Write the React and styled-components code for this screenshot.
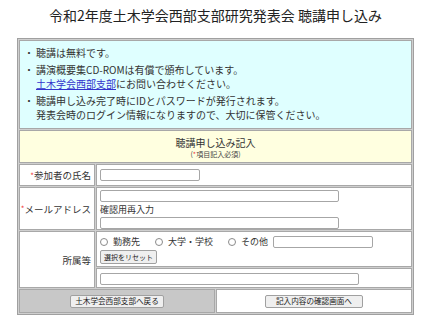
import React from "react";
import styled, { createGlobalStyle } from "styled-components";

const Global = createGlobalStyle`
  *, *::before, *::after { box-sizing: border-box; }
  html, body { margin: 0; padding: 0; background: #fff; }
  body {
    font-family: "Noto Sans CJK JP", "Noto Sans", sans-serif;
    color: #333;
  }
`;

const Page = styled.div`
  width: 425px;
  padding: 5px 0 0 17px;
`;

const Title = styled.h1`
  width: 397px;
  margin: 0 0 13px;
  font-size: 14px;
  font-weight: normal;
  line-height: 20px;
  text-align: center;
  color: #222;
`;

const Frame = styled.div`
  width: 397px;
  border: 1px solid #a0a0a0;
  padding: 1px;
  background: #cfcfcf;
  display: grid;
  grid-template-columns: 76px 1fr;
  gap: 1px;
`;

const Cell = styled.div`
  border: 1px solid #a8a8a8;
  background: ${(p) => p.$bg || "#fff"};
`;

const InfoCell = styled(Cell)`
  grid-column: 1 / -1;
  height: 89px;
  padding: 5px 10px 0 4px;
  font-size: 10px;
  line-height: 14px;
`;

const List = styled.ul`
  margin: 0;
  padding: 0;
  list-style: none;
`;

const Item = styled.li`
  display: flex;
  margin-bottom: 3px;
  &::before {
    content: "・";
    width: 12px;
    flex: none;
  }
`;

const Link = styled.a`
  color: #3333cc;
  text-decoration: underline;
`;

const HeaderCell = styled(Cell)`
  grid-column: 1 / -1;
  height: 33px;
  display: flex;
  flex-direction: column;
  align-items: center;
  justify-content: center;
  padding-top: 1px;
`;

const HeaderTitle = styled.div`
  font-size: 10px;
  line-height: 13px;
  color: #333;
`;

const HeaderNote = styled.div`
  font-size: 7px;
  line-height: 10px;
  color: #444;
`;

const Req = styled.span`
  color: #f03c3c;
  font-size: ${(p) => p.$size || "7px"};
  vertical-align: ${(p) => p.$up || "0"};
`;

const LabelCell = styled(Cell)`
  grid-row: ${(p) => p.$rows || "auto"};
  display: flex;
  align-items: center;
  justify-content: flex-end;
  padding-right: 3px;
  font-size: 9.5px;
  height: ${(p) => p.$h || "auto"};
`;

const FieldCell = styled(Cell)`
  height: ${(p) => p.$h};
  padding: ${(p) => p.$pad || "2px 2px"};
  display: flex;
  flex-direction: column;
  justify-content: ${(p) => p.$justify || "flex-start"};
  align-items: flex-start;
  font-size: 9px;
`;

const TextInput = styled.input`
  display: block;
  width: ${(p) => p.$w}px;
  height: ${(p) => p.$ht || 12}px;
  margin: 0 0 0 ${(p) => p.$ml || 1}px;
  padding: 0 2px;
  border: 1px solid #a6a6a6;
  border-radius: 2px;
  background: #fff;
  font-size: 9px;
  outline: none;
`;

const SubLabel = styled.div`
  line-height: 15px;
  margin-left: 1px;
  font-size: 9px;
  color: #333;
`;

const RadioRow = styled.div`
  display: flex;
  align-items: center;
  height: 14px;
  line-height: 14px;
`;

const RadioLabel = styled.label`
  display: flex;
  align-items: center;
  gap: 5px;
  margin-right: 14px;
  &:last-of-type { margin-right: 4px; }
`;

const Radio = styled.input.attrs({ type: "radio" })`
  appearance: none;
  width: 8px;
  height: 8px;
  margin: 0 0 0 1px;
  border: 1px solid #8a8a8a;
  border-radius: 50%;
  background: #fff;
`;

const SmallButton = styled.button`
  height: ${(p) => p.$h || 14}px;
  padding: 0 ${(p) => p.$px || 3}px;
  margin: ${(p) => p.$m || "0"};
  border: 1px solid #a0a0a0;
  border-radius: 2px;
  background: #efefef;
  color: #222;
  font-family: inherit;
  font-size: ${(p) => p.$fs || "7px"};
  line-height: 1;
  cursor: pointer;
`;

const ButtonRow = styled.div`
  grid-column: 1 / -1;
  display: grid;
  grid-template-columns: 1fr 1fr;
  gap: 1px;
`;

const ButtonCell = styled(Cell)`
  height: 24px;
  display: flex;
  align-items: center;
  justify-content: center;
`;

export default function App() {
  return (
    <>
      <Global />
      <Page>
        <Title>令和2年度土木学会西部支部研究発表会 聴講申し込み</Title>
        <Frame>
          <InfoCell $bg="#dfffff">
            <List>
              <Item>聴講は無料です。</Item>
              <Item>
                <span>
                  講演概要集CD-ROMは有償で頒布しています。
                  <br />
                  <Link href="#">土木学会西部支部</Link>にお問い合わせください。
                </span>
              </Item>
              <Item>
                <span>
                  聴講申し込み完了時にIDとパスワードが発行されます。
                  <br />
                  発表会時のログイン情報になりますので、大切に保管ください。
                </span>
              </Item>
            </List>
          </InfoCell>

          <HeaderCell $bg="#ffffe0">
            <HeaderTitle>聴講申し込み記入</HeaderTitle>
            <HeaderNote>
              (<Req $size="7px">*</Req>項目記入必須)
            </HeaderNote>
          </HeaderCell>

          <LabelCell $h="22px">
            <Req $size="8px" $up="2px">*</Req>参加者の氏名
          </LabelCell>
          <FieldCell $h="22px" $justify="center" $pad="0 2px">
            <TextInput $w={100} />
          </FieldCell>

          <LabelCell $h="43px">
            <Req $size="8px" $up="2px">*</Req>メールアドレス
          </LabelCell>
          <FieldCell $h="43px">
            <TextInput $w={239} />
            <SubLabel>確認用再入力</SubLabel>
            <TextInput $w={239} />
          </FieldCell>

          <LabelCell $rows="span 2">所属等</LabelCell>
          <FieldCell $h="36px" $pad="3px 2px 2px">
            <RadioRow>
              <RadioLabel>
                <Radio name="aff" />
                勤務先
              </RadioLabel>
              <RadioLabel>
                <Radio name="aff" />
                大学・学校
              </RadioLabel>
              <RadioLabel>
                <Radio name="aff" />
                その他
              </RadioLabel>
              <TextInput $w={100} $ht={12} $ml={0} />
            </RadioRow>
            <SmallButton $m="1px 0 0 1px" $h={14} $fs="7px">
              選択をリセット
            </SmallButton>
          </FieldCell>
          <FieldCell $h="20px" $pad="4px 2px 0">
            <TextInput $w={259} $ht={12} />
          </FieldCell>

          <ButtonRow>
            <ButtonCell $bg="#c8c8c8">
              <SmallButton $h={13} $px={4} $fs="7.6px">
                土木学会西部支部へ戻る
              </SmallButton>
            </ButtonCell>
            <ButtonCell>
              <SmallButton $h={13} $px={10} $fs="7.6px">
                記入内容の確認画面へ
              </SmallButton>
            </ButtonCell>
          </ButtonRow>
        </Frame>
      </Page>
    </>
  );
}
